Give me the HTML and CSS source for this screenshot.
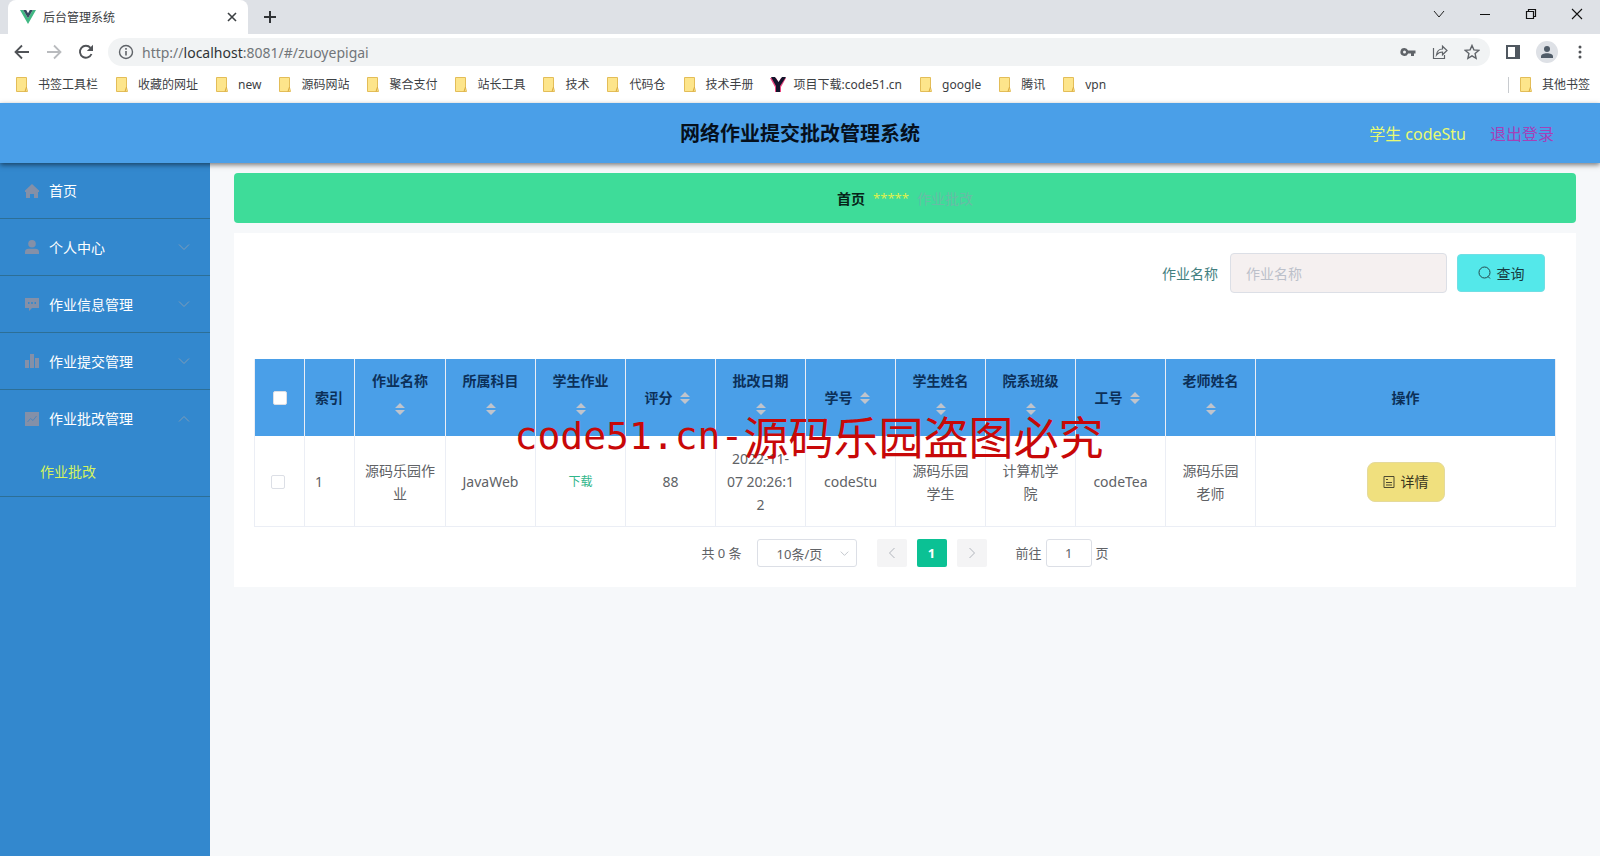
FILE: index.html
```html
<!DOCTYPE html>
<html lang="zh-CN">
<head>
<meta charset="utf-8">
<title>后台管理系统</title>
<link rel="stylesheet" href="styles.css">
</head>
<body>
<svg class="sprite" aria-hidden="true">
  <symbol id="folder" viewBox="0 0 12 15"><path d="M.5.5h10v10l1 4H.5z" fill="#fde58b" stroke="#e3bd58"/><path d="M9 14.500l1.500-4.500" stroke="#d9a93c" fill="none"/></symbol>
  <symbol id="down" viewBox="0 0 12 12"><path d="M1 3.500l5 5 5-5" fill="none" stroke="currentColor"/></symbol>
  <symbol id="sort" viewBox="0 0 10 12"><path d="M0 5l5-5 5 5zM0 7l5 5 5-5z" fill="#c0c4cc"/></symbol>
</svg>

<div class="browser">
  <div class="tabs">
    <div class="tab">
      <svg width="16" height="14" viewBox="0 0 16 14"><path d="M0 0h3.200L8 8.300 12.800 0H16L8 14z" fill="#41b883"/><path d="M3.200 0h3L8 3.200 9.800 0h3L8 8.300z" fill="#35495e"/></svg>
      <span class="tab-title">后台管理系统</span>
      <button class="plain" aria-label="关闭标签页"><svg width="10" height="10" viewBox="0 0 10 10"><path d="M1 1l8 8M9 1L1 9" stroke="#3c4043" stroke-width="1.600"/></svg></button>
    </div>
    <button class="plain new-tab" aria-label="新标签页"><svg width="12" height="12" viewBox="0 0 12 12"><path d="M6 0v12M0 6h12" stroke="#303336" stroke-width="2"/></svg></button>
    <div class="window-buttons">
      <button class="plain" aria-label="搜索标签页"><svg width="12" height="12" viewBox="0 0 12 12"><path d="M1 3l5 6 5-6" fill="none" stroke="#222"/></svg></button>
      <button class="plain" aria-label="最小化"><svg width="12" height="12" viewBox="0 0 12 12"><path d="M1 6.500h10" stroke="#111"/></svg></button>
      <button class="plain" aria-label="还原"><svg width="12" height="12" viewBox="0 0 12 12"><path d="M1.500 3.500h7v7h-7zM3.500 3.500v-2h7v7h-2" fill="none" stroke="#111" stroke-width="1.200"/></svg></button>
      <button class="plain" aria-label="关闭"><svg width="12" height="12" viewBox="0 0 12 12"><path d="M1 1l10 10M11 1L1 11" stroke="#111" stroke-width="1.100"/></svg></button>
    </div>
  </div>
  <div class="toolbar">
    <div class="nav-buttons">
      <button class="plain" aria-label="后退"><svg width="16" height="16" viewBox="0 0 16 16"><path d="M15 8H2M8 1.500L1.500 8 8 14.500" fill="none" stroke="#505357" stroke-width="1.800"/></svg></button>
      <button class="plain" aria-label="前进"><svg width="16" height="16" viewBox="0 0 16 16"><path d="M1 8h13M8 1.500L14.500 8 8 14.500" fill="none" stroke="#b9bbbe" stroke-width="1.800"/></svg></button>
      <button class="plain" aria-label="刷新"><svg width="16" height="16" viewBox="0 0 16 16"><path d="M13.500 10a6 6 0 1 1-1-6.200" fill="none" stroke="#505357" stroke-width="1.900"/><path d="M15 .8V7H8.800z" fill="#505357"/></svg></button>
    </div>
    <div class="address">
      <svg width="16" height="16" viewBox="0 0 16 16"><circle cx="8" cy="8" r="6.500" fill="none" stroke="#5f6368" stroke-width="1.400"/><path d="M8 7v4.500M8 4v1.700" stroke="#5f6368" stroke-width="1.600"/></svg>
      <span class="url">http://<b>localhost</b>:8081/#/zuoyepigai</span>
      <button class="plain" aria-label="密码"><svg width="16" height="16" viewBox="0 0 16 16"><path fill-rule="evenodd" d="M4.500 4a4 4 0 1 0 3.600 5.500H11V12h3V9.500h1.500v-3H8.100A4 4 0 0 0 4.500 4zm0 2.500a1.500 1.500 0 1 1 0 3 1.500 1.500 0 0 1 0-3z" fill="#5f6368"/></svg></button>
      <button class="plain" aria-label="分享"><svg width="16" height="16" viewBox="0 0 16 16"><path d="M1.500 4v10.500h11V11M4.500 11c.5-4 2.500-6 6-6V2.200L15 6.500l-4.500 4.300V8c-3 0-4.500 1-6 3z" fill="none" stroke="#5f6368" stroke-width="1.200"/></svg></button>
      <button class="plain" aria-label="收藏"><svg width="16" height="16" viewBox="0 0 16 16"><path d="M8 1.500l1.900 4.400 4.800.5-3.600 3.200 1 4.700L8 11.900l-4.100 2.400 1-4.700L1.300 6.400l4.800-.5z" fill="none" stroke="#5f6368" stroke-width="1.400"/></svg></button>
    </div>
    <div class="tool-buttons">
      <button class="plain" aria-label="侧边栏"><svg width="14" height="14" viewBox="0 0 14 14"><path d="M1 1h12v12H1z" fill="none" stroke="#505860" stroke-width="2"/><path d="M9 0h5v14H9z" fill="#505860"/></svg></button>
      <button class="plain" aria-label="用户"><svg width="22" height="22" viewBox="0 0 22 22"><circle cx="11" cy="11" r="11" fill="#dee1e6"/><circle cx="11" cy="8" r="3" fill="#505c68"/><path d="M5 17v-1.500c0-2 3-3.200 6-3.200s6 1.200 6 3.200V17z" fill="#505c68"/></svg></button>
      <button class="plain" aria-label="菜单"><svg width="4" height="14" viewBox="0 0 4 14"><circle cx="2" cy="2" r="1.500" fill="#505357"/><circle cx="2" cy="7" r="1.500" fill="#505357"/><circle cx="2" cy="12" r="1.500" fill="#505357"/></svg></button>
    </div>
  </div>
  <nav class="bookmarks">
    <a href="#"><svg class="folder"><use href="#folder"/></svg>书签工具栏</a>
    <a href="#"><svg class="folder"><use href="#folder"/></svg>收藏的网址</a>
    <a href="#"><svg class="folder"><use href="#folder"/></svg>new</a>
    <a href="#"><svg class="folder"><use href="#folder"/></svg>源码网站</a>
    <a href="#"><svg class="folder"><use href="#folder"/></svg>聚合支付</a>
    <a href="#"><svg class="folder"><use href="#folder"/></svg>站长工具</a>
    <a href="#"><svg class="folder"><use href="#folder"/></svg>技术</a>
    <a href="#"><svg class="folder"><use href="#folder"/></svg>代码仓</a>
    <a href="#"><svg class="folder"><use href="#folder"/></svg>技术手册</a>
    <a href="#" class="site"><svg width="16" height="16" viewBox="0 0 16 16"><path d="M0 1h6l3 5 2-5h5l-5 9v5H5v-5z" fill="#e8447f"/><path d="M1 0h4l3.500 5L12 0h4l-6 9v6H6V9z" fill="#14142b"/></svg>项目下载:code51.cn</a>
    <a href="#"><svg class="folder"><use href="#folder"/></svg>google</a>
    <a href="#"><svg class="folder"><use href="#folder"/></svg>腾讯</a>
    <a href="#"><svg class="folder"><use href="#folder"/></svg>vpn</a>
    <a href="#" class="other"><svg class="folder"><use href="#folder"/></svg>其他书签</a>
  </nav>
</div>

<header class="header">
  <h1>网络作业提交批改管理系统</h1>
  <div class="user"><span>学生 codeStu</span><a href="#">退出登录</a></div>
</header>

<div class="layout">
  <nav class="sidebar">
    <a class="item" href="#"><svg class="mi" viewBox="0 0 14 14"><path d="M7 0l7 6.500V8h-1v6H9v-4H5v4H1V8H0V6.500z"/></svg><span>首页</span></a>
    <a class="item" href="#"><svg class="mi" viewBox="0 0 14 14"><circle cx="7" cy="3.800" r="3.800"/><path d="M0 14v-2c0-2 1.500-3.200 3.500-3.200h7c2 0 3.500 1.200 3.500 3.200v2z"/></svg><span>个人中心</span><svg class="arrow"><use href="#down"/></svg></a>
    <a class="item" href="#"><svg class="mi" viewBox="0 0 14 14"><path fill-rule="evenodd" d="M0 1h14v10H7l-3 3v-3H0zm3 4v2h1.500V5zm3.200 0v2h1.600V5zm3.300 0v2H11V5z"/></svg><span>作业信息管理</span><svg class="arrow"><use href="#down"/></svg></a>
    <a class="item" href="#"><svg class="mi" viewBox="0 0 14 14"><path d="M0 6h4v8H0zM5 0h4v14H5zM10 4h4v10h-4z"/></svg><span>作业提交管理</span><svg class="arrow"><use href="#down"/></svg></a>
    <div class="group">
      <a class="item" href="#"><svg class="mi" viewBox="0 0 14 14"><path d="M0 0h14v14H0z"/><path d="M2.500 10l3-3.500 2.500 2L11.500 4" fill="none" stroke="#4f86bc"/></svg><span>作业批改管理</span><svg class="arrow up"><use href="#down"/></svg></a>
      <a class="sub" href="#">作业批改</a>
    </div>
  </nav>

  <main class="main">
    <div class="crumbs"><b>首页</b><span class="stars">*****</span><span class="current">作业批改</span></div>
    <section class="card">
      <form class="search">
        <label for="name">作业名称</label>
        <input id="name" type="text" placeholder="作业名称">
        <button type="button"><svg width="14" height="14" viewBox="0 0 14 14"><circle cx="6.500" cy="6.500" r="5.500" fill="none" stroke="#24494d"/><path d="M10 10.500l2 2" stroke="#24494d"/></svg>查询</button>
      </form>
      <table class="grid">
        <colgroup><col class="c-narrow"><col class="c-narrow"><col class="c-name"><col><col><col><col><col><col><col><col><col><col class="c-action"></colgroup>
        <thead>
          <tr>
            <th><input type="checkbox" aria-label="全选"></th>
            <th class="left">索引</th>
            <th><div class="sortable">作业名称<svg><use href="#sort"/></svg></div></th>
            <th><div class="sortable">所属科目<svg><use href="#sort"/></svg></div></th>
            <th><div class="sortable">学生作业<svg><use href="#sort"/></svg></div></th>
            <th><div class="sortable">评分<svg><use href="#sort"/></svg></div></th>
            <th><div class="sortable">批改日期<svg><use href="#sort"/></svg></div></th>
            <th><div class="sortable">学号<svg><use href="#sort"/></svg></div></th>
            <th><div class="sortable">学生姓名<svg><use href="#sort"/></svg></div></th>
            <th><div class="sortable">院系班级<svg><use href="#sort"/></svg></div></th>
            <th><div class="sortable">工号<svg><use href="#sort"/></svg></div></th>
            <th><div class="sortable">老师姓名<svg><use href="#sort"/></svg></div></th>
            <th>操作</th>
          </tr>
        </thead>
        <tbody>
          <tr>
            <td class="pick"><input type="checkbox" aria-label="选择第1行"></td>
            <td class="left">1</td>
            <td>源码乐园作业</td>
            <td>JavaWeb</td>
            <td><button class="plain download">下载</button></td>
            <td>88</td>
            <td>2022-11-<br>07 20:26:1<br>2</td>
            <td>codeStu</td>
            <td>源码乐园学生</td>
            <td>计算机学院</td>
            <td>codeTea</td>
            <td>源码乐园老师</td>
            <td><button class="detail"><svg width="12" height="14" viewBox="0 0 12 14"><path d="M1 1.500h10v11H1zM3 4.500h2M3 7.500h6M3 10h6" fill="none" stroke="#4d4a30"/></svg>详情</button></td>
          </tr>
        </tbody>
      </table>
      <div class="pager">
        <span class="total">共 0 条</span>
        <div class="size"><select aria-label="每页条数"><option>10条/页</option></select><svg><use href="#down"/></svg></div>
        <button class="page" aria-label="上一页"><svg class="prev"><use href="#down"/></svg></button>
        <button class="page active">1</button>
        <button class="page" aria-label="下一页"><svg class="next"><use href="#down"/></svg></button>
        <label class="jump">前往<input type="text" value="1">页</label>
      </div>
    </section>
  </main>
</div>
<div class="watermark"><span>code51.cn-</span>源码乐园盗图必究</div>
</body>
</html>
```

FILE: styles.css
```css
* { box-sizing: border-box; }

body {
  margin: 0;
  min-height: 100vh;
  display: flex;
  flex-direction: column;
  position: relative;
  background: #f6f8fa;
  color: #606266;
  font: 14px/23px "Noto Sans", "Noto Sans CJK SC", sans-serif;
}

a { color: inherit; text-decoration: none; }
svg { display: block; flex: none; }
button, input, select { font: inherit; margin: 0; }
.sprite { position: absolute; width: 0; height: 0; }
.plain { display: block; padding: 0; border: 0; background: none; color: inherit; }

/* browser window */
.browser { background: #fff; color: #3c4043; }
.tabs { display: flex; align-items: center; height: 34px; padding-left: 8px; background: #dee1e6; }
.tab {
  display: flex;
  align-items: center;
  gap: 7px;
  width: 240px;
  height: 34px;
  padding: 0 11px 0 12px;
  border-radius: 8px 8px 0 0;
  background: #fff;
  font-size: 12px;
}
.tab-title { flex: 1; }
.new-tab { margin-left: 16px; }
.window-buttons { display: flex; gap: 34px; margin-left: auto; padding: 0 17px 6px 0; }

.toolbar { display: flex; align-items: center; height: 36px; padding: 0 20px 0 14px; }
.nav-buttons { display: flex; gap: 16px; margin-right: 14px; }
.address {
  display: flex;
  align-items: center;
  flex: 1;
  gap: 16px;
  height: 28px;
  padding: 0 10px;
  border-radius: 14px;
  background: #f1f3f4;
}
.url { flex: 1; margin-left: -8px; color: #72767a; }
.url b { color: #303336; font-weight: 400; }
.tool-buttons { display: flex; align-items: center; gap: 16px; margin-left: 16px; }
.tool-buttons button:last-child { margin-left: 4px; }
.toolbar { padding-right: 18px; }

.bookmarks { display: flex; gap: 18px; height: 33px; padding: 0 10px 4px 16px; font-size: 12px; }
.bookmarks a { display: flex; align-items: center; gap: 10px; white-space: nowrap; }
.bookmarks .site { gap: 8px; margin-left: -2px; }
.bookmarks .other { margin-left: auto; padding-left: 12px; background: linear-gradient(#c8cbcf, #c8cbcf) no-repeat left center / 1px 16px; }
.folder { width: 12px; height: 15px; }

/* application header */
.header {
  display: grid;
  grid-template-columns: 1fr auto 1fr;
  align-items: center;
  height: 60px;
  padding: 2px 46px 0;
  position: relative;
  background: #4a9fe8;
  box-shadow: 0 2px 5px rgba(0, 0, 0, .5);
}
.header h1 { grid-column: 2; margin: 0; color: #06101c; font-size: 20px; line-height: 28px; }
.user { display: flex; justify-content: flex-end; gap: 24px; color: #e9fa72; font-size: 16px; }
.user a { color: #a541b8; }

.layout { display: flex; flex: 1; }

.sidebar { width: 210px; flex: none; background: #3388ce; color: #fff; }
.item { display: flex; align-items: center; gap: 10px; height: 57px; padding: 0 20px 0 25px; }
.sidebar > .item, .group { border-bottom: 1px solid #2d6f96; }
.sidebar > .item:first-child { height: 56px; }
.item span { flex: 1; }
.mi { width: 14px; height: 14px; fill: #8490a8; }
.arrow { width: 12px; height: 12px; color: #7f9db8; }
.up { transform: rotate(180deg); }
.sub { display: block; padding: 0 40px; height: 49px; line-height: 49px; color: #d3f35f; }

.main { flex: 1; min-width: 0; padding: 10px 24px; }
.crumbs {
  display: flex;
  align-items: center;
  justify-content: center;
  gap: 8px;
  height: 50px;
  margin-bottom: 10px;
  border-radius: 4px;
  background: #3edc99;
}
.crumbs b { color: #062418; }
.stars { color: #dff04f; font-size: 13px; }
.current { color: #67bda6; }

.card { padding: 20px; background: #fff; }
.search { display: flex; align-items: center; justify-content: flex-end; gap: 10px; margin-bottom: 66px; padding-right: 11px; }
.search label { color: #43807f; margin-right: 2px; }
.search input {
  width: 217px;
  height: 40px;
  padding: 0 15px;
  border: 1px solid #dcdfe6;
  border-radius: 4px;
  background: #f5f0f0;
}
.search input::placeholder { color: #bcc0ca; opacity: 1; }
.search button {
  display: flex;
  align-items: center;
  justify-content: center;
  gap: 5px;
  width: 88px;
  height: 38px;
  padding: 0;
  border: 1px solid #70dfe4;
  border-radius: 4px;
  background: #54e8ea;
  color: #183b40;
}

/* data table */
.grid { width: 100%; table-layout: fixed; border-spacing: 0; border-left: 1px solid #ebeef5; }
.c-narrow { width: 50px; }
.c-name { width: 91px; }
.c-action { width: 300px; }
.grid th, .grid td { padding: 10px; border-right: 1px solid #ebeef5; text-align: center; vertical-align: middle; }
.grid th { background: #4a9fe8; color: #0c3059; }
.grid td { padding-top: 11px; border-bottom: 1px solid #ebeef5; }
.grid .left { text-align: left; }
.sortable { display: flex; flex-wrap: wrap; align-items: center; justify-content: center; }
.sortable svg { width: 24px; height: 34px; padding: 11px 7px; }
.grid input {
  appearance: none;
  display: block;
  width: 14px;
  height: 14px;
  margin: 0 auto;
  border: 1px solid #dcdfe6;
  border-radius: 2px;
  background: #fff;
}
.grid td.pick { padding-right: 14px; }
.download { margin: 0 auto; color: #31b68b; font-size: 12px; }
.detail {
  display: inline-flex;
  align-items: center;
  gap: 6px;
  height: 40px;
  padding: 0 15px;
  border: 1px solid #e5da9b;
  border-radius: 8px;
  background: #f0e07e;
  color: #38351d;
}

.pager { display: flex; align-items: center; justify-content: center; gap: 10px; margin-top: 12px; font-size: 13px; line-height: 28px; }
.total { margin-right: 5px; }
.size { position: relative; margin-right: 10px; }
.size select {
  appearance: none;
  display: block;
  width: 100px;
  height: 28px;
  padding: 0 25px 0 19px;
  border: 1px solid #dcdfe6;
  border-radius: 3px;
  background: #fff;
  color: #606266;
}
.size svg { position: absolute; right: 8px; top: 10px; width: 9px; height: 9px; color: #b0b5be; pointer-events: none; }
.page { display: flex; align-items: center; justify-content: center; width: 30px; height: 28px; padding: 0; border: 0; border-radius: 2px; background: #f4f4f5; color: #b0b4bb; }
.page svg { width: 12px; height: 12px; }
.page.active { background: #0bc194; color: #fff; font-weight: 700; }
.prev { transform: rotate(90deg); }
.next { transform: rotate(-90deg); }
.jump { display: flex; gap: 4px; margin-left: 19px; }
.jump input { width: 46px; height: 28px; padding: 0; border: 1px solid #dcdfe6; border-radius: 3px; color: #606266; text-align: center; }

/* watermark laid over the table */
.watermark {
  display: flex;
  align-items: center;
  justify-content: center;
  position: absolute;
  left: 0;
  right: 0;
  top: 406px;
  padding-left: 18px;
  color: #c80808;
  font: 45px/60px "Noto Sans CJK SC", sans-serif;
  white-space: nowrap;
  pointer-events: none;
}
.watermark span { font-family: "DejaVu Sans Mono", monospace; font-size: 38px; }
```
